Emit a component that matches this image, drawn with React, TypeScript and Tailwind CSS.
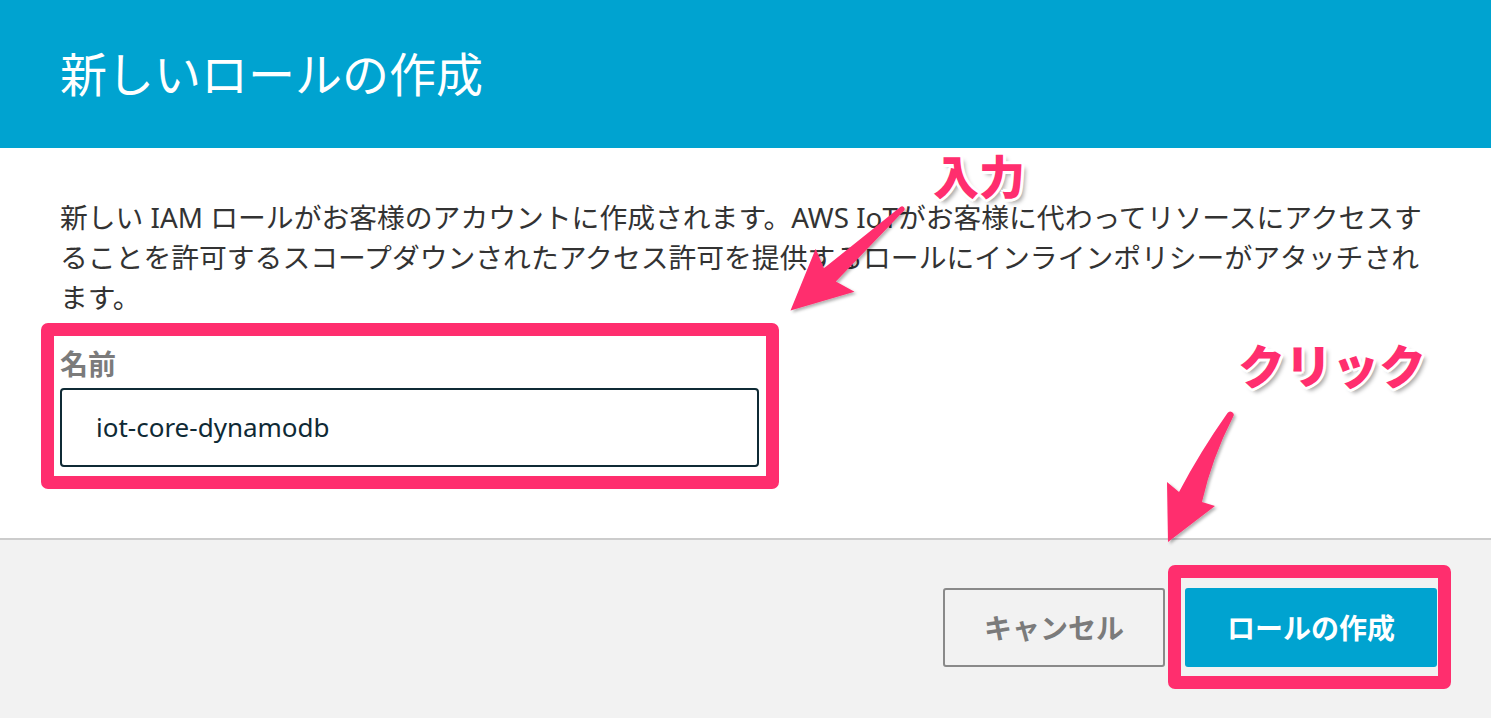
import React from 'react';

const PINK = '#ff2e6e';

// 注釈の矢印（スクリーンショット上の赤い矢印）
function Arrows() {
  return (
    <svg className="pointer-events-none absolute inset-0" width="1491" height="718" viewBox="0 0 1491 718">
      <defs>
        <filter id="sh" x="-20%" y="-20%" width="140%" height="140%">
          <feDropShadow dx="2" dy="2" stdDeviation="1.5" floodColor="#000" floodOpacity="0.3" />
        </filter>
      </defs>
      <path
        d="M 900.3 207.1 Q 862 238 823.9 268.2 L 815.7 248.7 L 790.5 310.4 L 854.5 291.7 L 835.9 281.6 Q 870 246 903.7 210.9 A 2.5 2.5 0 0 0 900.3 207.1 Z"
        fill={PINK}
        filter="url(#sh)"
      />
      <path
        d="M 1227.5 413 Q 1200 452 1179 492 L 1167 482 L 1168 542 L 1215 506 L 1202 502 Q 1212 458 1233 417 A 3 3 0 0 0 1227.5 413 Z"
        fill={PINK}
        filter="url(#sh)"
      />
    </svg>
  );
}

const outline =
  '[text-shadow:3px_0_0_#fff,-3px_0_0_#fff,0_3px_0_#fff,0_-3px_0_#fff,2px_2px_0_#fff,-2px_-2px_0_#fff,2px_-2px_0_#fff,-2px_2px_0_#fff,4px_4px_4px_rgba(0,0,0,0.35)]';

export default function App() {
  return (
    <div className="relative flex h-[718px] w-full flex-col overflow-hidden bg-white font-['Noto_Sans','Noto_Sans_CJK_JP',sans-serif]">
      {/* Header */}
      <div className="flex h-[148px] shrink-0 items-center bg-[#00a3d0] pl-[60px]">
        <h1 className="text-[47px] font-normal leading-none text-white">新しいロールの作成</h1>
      </div>

      {/* Body */}
      <div className="h-[390px] shrink-0 px-[60px] pt-[49px]">
        <p className="text-[27.8px] leading-[40px] text-[#333333]">
          新しい IAM ロールがお客様のアカウントに作成されます。AWS IoTがお客様に代わってリソースにアクセスす
          <br />
          ることを許可するスコープダウンされたアクセス許可を提供するロールにインラインポリシーがアタッチされ
          <br />
          ます。
        </p>

        <div className="relative mt-[27px] w-[699px]">
          <div className="text-[28px] font-bold leading-[40px] text-[#7b7b7b]">名前</div>
          <div className="mt-[4px] flex h-[79px] items-center rounded-[4px] border-2 border-[#0f2a35] pl-[34px] text-[26px] text-[#0f2a35]">
            iot-core-dynamodb
          </div>
          <div className="absolute -top-[21px] -right-[20px] -bottom-[22px] -left-[19px] rounded-[7px] border-[13px] border-[#ff2e6e]" />
        </div>
      </div>

      {/* Footer */}
      <div className="flex flex-1 items-start justify-end gap-[20px] border-t-2 border-[#cccccc] bg-[#f2f2f2] pt-[48px] pr-[54px]">
        <button className="flex h-[79px] w-[222px] items-center justify-center rounded-[3px] border-2 border-[#8a8a8a] text-[28px] font-bold text-[#7b7b7b]">
          キャンセル
        </button>
        <div className="relative">
          <button className="flex h-[79px] w-[252px] items-center justify-center rounded-[3px] bg-[#00a3d0] text-[28px] font-bold text-white">
            ロールの作成
          </button>
          <div className="absolute -top-[23px] -right-[14px] -bottom-[22px] -left-[17px] rounded-[7px] border-[13px] border-[#ff2e6e]" />
        </div>
      </div>

      {/* Annotations */}
      <Arrows />
      <div className={`absolute top-[157px] left-[933px] text-[46px] font-black leading-[38px] text-[#ff2e6e] ${outline}`}>
        入力
      </div>
      <div className={`absolute top-[343px] left-[1238px] text-[47px] font-black leading-none text-[#ff2e6e] ${outline}`}>
        クリック
      </div>
    </div>
  );
}
